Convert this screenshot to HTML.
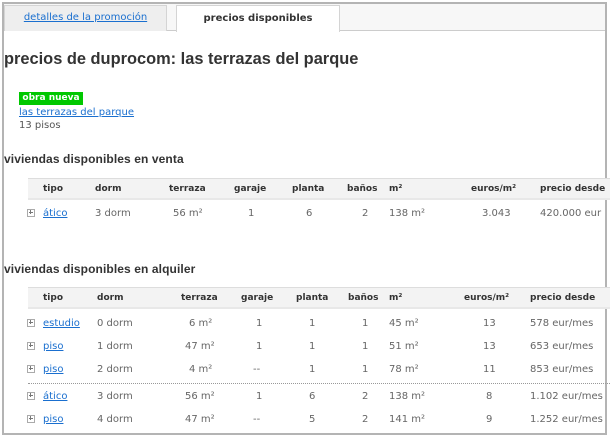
<!DOCTYPE html>
<html><head><meta charset="utf-8"><style>
*{margin:0;padding:0;box-sizing:border-box}
body{width:610px;height:439px;background:#fff;font-family:"DejaVu Sans",Verdana,sans-serif;position:relative;overflow:hidden;color:#555}
.frame{position:absolute;left:2px;top:2px;width:605px;height:433px;border:2px solid #b4b4b4}
.bar{position:absolute;left:4px;top:4px;width:601px;height:27px;background:#f7f7f7;border-bottom:1px solid #ccc}
.t1{position:absolute;left:4px;top:5px;width:163px;height:26px;background:#eee;border:1px solid #d4d4d4;border-bottom:none;text-align:center;font-size:10px;line-height:24px}
.t2{position:absolute;left:176px;top:5px;width:164px;height:27px;background:#fff;border:1px solid #d4d4d4;border-bottom:none;text-align:center;font-size:10px;font-weight:bold;line-height:26px;color:#333}
a{color:#1a6fcf;text-decoration:underline}
.a{position:absolute;white-space:nowrap}
h1{position:absolute;left:4px;top:50px;font:bold 16.4px "Liberation Sans",Arial,sans-serif;color:#333}
.badge{position:absolute;left:19px;top:92px;width:64px;height:13px;background:#00c800;color:#fff;font-size:9px;font-weight:bold;line-height:13px;text-align:center}
h2{position:absolute;left:4px;font:bold 12px "Liberation Sans",Arial,sans-serif;color:#333;letter-spacing:0.1px}
.hd{position:absolute;left:28px;width:582px;height:22px;background:#f3f3f3;border-top:1px solid #ddd;border-bottom:2px solid #e8e8e8}
.h{position:absolute;font-size:9px;font-weight:bold;color:#333;white-space:nowrap}
.c{position:absolute;font-size:10px;color:#666;white-space:nowrap}
.pl{position:absolute;width:8px;height:8px;border:1px solid #aaa;background:#fff}
.pl:before{content:"";position:absolute;left:1px;top:2px;width:4px;height:1px;background:#777}
.pl:after{content:"";position:absolute;left:2px;top:0px;width:1px;height:4px;background:#777}
.dot{position:absolute;left:28px;top:383px;width:582px;border-top:1px dotted #999}
</style></head><body>
<div class="frame"></div>
<div class="bar"></div>
<div class="t1"><a>detalles de la promoción</a></div>
<div class="t2">precios disponibles</div>
<h1>precios de duprocom: las terrazas del parque</h1>
<div class="badge">obra nueva</div>
<div class="a" style="left:19px;top:107px;font-size:10px"><a>las terrazas del parque</a></div>
<div class="a" style="left:19px;top:120px;font-size:10px;color:#555">13 pisos</div>
<h2 style="top:152px">viviendas disponibles en venta</h2>
<div class="hd" style="top:178px"></div>
<div class="h" style="left:43px;top:184px">tipo</div>
<div class="h" style="left:95px;top:184px">dorm</div>
<div class="h" style="left:169px;top:184px">terraza</div>
<div class="h" style="left:234px;top:184px">garaje</div>
<div class="h" style="left:292px;top:184px">planta</div>
<div class="h" style="left:347px;top:184px">baños</div>
<div class="h" style="left:389px;top:184px">m²</div>
<div class="h" style="left:471px;top:184px">euros/m²</div>
<div class="h" style="left:540px;top:184px">precio desde</div>
<div class="pl" style="left:27px;top:209px"></div>
<div class="c" style="left:43px;top:208px"><a>ático</a></div>
<div class="c" style="left:95px;top:208px">3 dorm</div>
<div class="c" style="left:173px;top:208px">56 m²</div>
<div class="c" style="left:248px;top:208px">1</div>
<div class="c" style="left:306px;top:208px">6</div>
<div class="c" style="left:362px;top:208px">2</div>
<div class="c" style="left:389px;top:208px">138 m²</div>
<div class="c" style="left:482px;top:208px">3.043</div>
<div class="c" style="left:540px;top:208px">420.000 eur</div>
<h2 style="top:262px">viviendas disponibles en alquiler</h2>
<div class="hd" style="top:287px"></div>
<div class="h" style="left:43px;top:293px">tipo</div>
<div class="h" style="left:97px;top:293px">dorm</div>
<div class="h" style="left:181px;top:293px">terraza</div>
<div class="h" style="left:241px;top:293px">garaje</div>
<div class="h" style="left:296px;top:293px">planta</div>
<div class="h" style="left:348px;top:293px">baños</div>
<div class="h" style="left:389px;top:293px">m²</div>
<div class="h" style="left:464px;top:293px">euros/m²</div>
<div class="h" style="left:530px;top:293px">precio desde</div>

<div class="pl" style="left:27px;top:319px"></div>
<div class="c" style="left:43px;top:318px"><a>estudio</a></div>
<div class="c" style="left:97px;top:318px">0 dorm</div>
<div class="c" style="left:189px;top:318px">6 m²</div>
<div class="c" style="left:256px;top:318px">1</div>
<div class="c" style="left:309px;top:318px">1</div>
<div class="c" style="left:362px;top:318px">1</div>
<div class="c" style="left:389px;top:318px">45 m²</div>
<div class="c" style="left:483px;top:318px">13</div>
<div class="c" style="left:530px;top:318px">578 eur/mes</div>

<div class="pl" style="left:27px;top:342px"></div>
<div class="c" style="left:43px;top:341px"><a>piso</a></div>
<div class="c" style="left:97px;top:341px">1 dorm</div>
<div class="c" style="left:185px;top:341px">47 m²</div>
<div class="c" style="left:256px;top:341px">1</div>
<div class="c" style="left:309px;top:341px">1</div>
<div class="c" style="left:362px;top:341px">1</div>
<div class="c" style="left:389px;top:341px">51 m²</div>
<div class="c" style="left:483px;top:341px">13</div>
<div class="c" style="left:530px;top:341px">653 eur/mes</div>

<div class="pl" style="left:27px;top:365px"></div>
<div class="c" style="left:43px;top:364px"><a>piso</a></div>
<div class="c" style="left:97px;top:364px">2 dorm</div>
<div class="c" style="left:189px;top:364px">4 m²</div>
<div class="c" style="left:253px;top:364px">--</div>
<div class="c" style="left:309px;top:364px">1</div>
<div class="c" style="left:362px;top:364px">1</div>
<div class="c" style="left:389px;top:364px">78 m²</div>
<div class="c" style="left:483px;top:364px">11</div>
<div class="c" style="left:530px;top:364px">853 eur/mes</div>
<div class="dot"></div>

<div class="pl" style="left:27px;top:392px"></div>
<div class="c" style="left:43px;top:391px"><a>ático</a></div>
<div class="c" style="left:97px;top:391px">3 dorm</div>
<div class="c" style="left:185px;top:391px">56 m²</div>
<div class="c" style="left:256px;top:391px">1</div>
<div class="c" style="left:309px;top:391px">6</div>
<div class="c" style="left:362px;top:391px">2</div>
<div class="c" style="left:389px;top:391px">138 m²</div>
<div class="c" style="left:486px;top:391px">8</div>
<div class="c" style="left:530px;top:391px">1.102 eur/mes</div>

<div class="pl" style="left:27px;top:415px"></div>
<div class="c" style="left:43px;top:414px"><a>piso</a></div>
<div class="c" style="left:97px;top:414px">4 dorm</div>
<div class="c" style="left:185px;top:414px">47 m²</div>
<div class="c" style="left:253px;top:414px">--</div>
<div class="c" style="left:309px;top:414px">5</div>
<div class="c" style="left:362px;top:414px">2</div>
<div class="c" style="left:389px;top:414px">141 m²</div>
<div class="c" style="left:486px;top:414px">9</div>
<div class="c" style="left:530px;top:414px">1.252 eur/mes</div>
</body></html>
